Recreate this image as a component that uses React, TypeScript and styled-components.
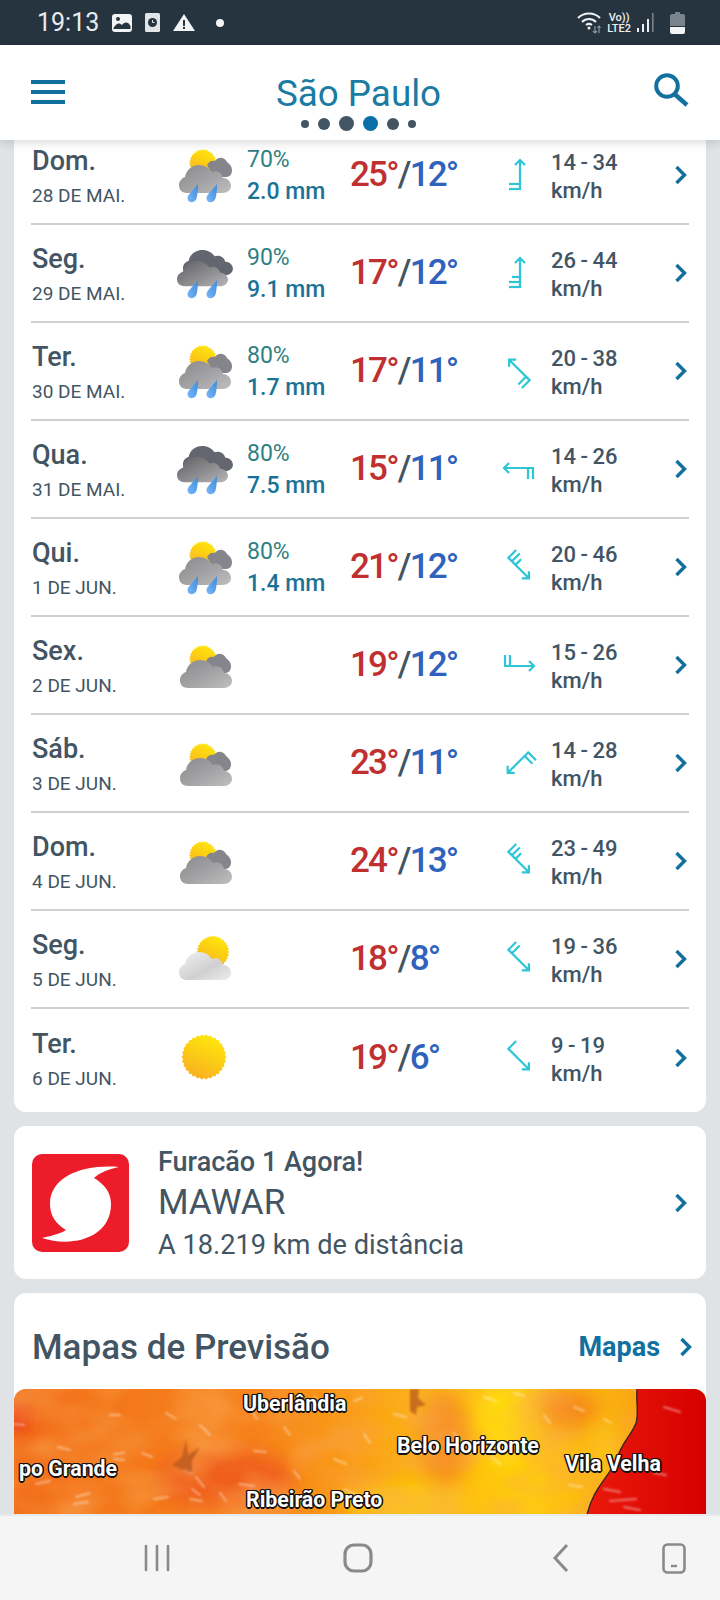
import React from "react";
import styled, {createGlobalStyle} from "styled-components";

const SLATE = "#435563";
const BLUE = "#12709f";

type Sky = "sunRain" | "cloudRain" | "sunCloud" | "sunLight" | "sun";

type Day = {
    name: string
    date: string
    sky: Sky
    chance?: string
    rain?: string
    max: number
    min: number
    angle: number
    barbs: number
    wind: string
}

const days: Day[] = [
    {name: "Dom.", date: "28 DE MAI.", sky: "sunRain", chance: "70%", rain: "2.0 mm", max: 25, min: 12, angle: 0, barbs: 2, wind: "14 - 34"},
    {name: "Seg.", date: "29 DE MAI.", sky: "cloudRain", chance: "90%", rain: "9.1 mm", max: 17, min: 12, angle: 0, barbs: 3, wind: "26 - 44"},
    {name: "Ter.", date: "30 DE MAI.", sky: "sunRain", chance: "80%", rain: "1.7 mm", max: 17, min: 11, angle: -45, barbs: 2, wind: "20 - 38"},
    {name: "Qua.", date: "31 DE MAI.", sky: "cloudRain", chance: "80%", rain: "7.5 mm", max: 15, min: 11, angle: -90, barbs: 2, wind: "14 - 26"},
    {name: "Qui.", date: "1 DE JUN.", sky: "sunRain", chance: "80%", rain: "1.4 mm", max: 21, min: 12, angle: 135, barbs: 3, wind: "20 - 46"},
    {name: "Sex.", date: "2 DE JUN.", sky: "sunCloud", max: 19, min: 12, angle: 90, barbs: 2, wind: "15 - 26"},
    {name: "Sáb.", date: "3 DE JUN.", sky: "sunCloud", max: 23, min: 11, angle: 225, barbs: 2, wind: "14 - 28"},
    {name: "Dom.", date: "4 DE JUN.", sky: "sunCloud", max: 24, min: 13, angle: 135, barbs: 3, wind: "23 - 49"},
    {name: "Seg.", date: "5 DE JUN.", sky: "sunLight", max: 18, min: 8, angle: 135, barbs: 2, wind: "19 - 36"},
    {name: "Ter.", date: "6 DE JUN.", sky: "sun", max: 19, min: 6, angle: 135, barbs: 1, wind: "9 - 19"},
];

const CLOUD = "M8 28 C2 28 0 24 0 20 C0 16 3 13 6 12 C7 5 13 0 20 0 C26 0 30 3 33 7 C38 5 43 8 44 13 C48 13 52 16 52 21 C52 25 48 28 44 28 Z";
const BACK_CLOUD = "M33 20 C35 16 38 15 41 16 C43 12 50 11 53 17 C56 19 58 22 58 25 C58 29 56 32 52 32 L40 32 Z";
const DROP = "M11 0 C11 5 10.5 11 9.5 14.5 C8.3 18 4.5 19 2.2 17.6 C0 16 0 13 1.6 11 C3.8 8 7.6 4.5 11 0Z";

const sunPoints = (cx: number, cy: number, r: number) => {
    const points: string[] = [];
    const spikes = 30;
    for (let i = 0; i < spikes * 2; i++) {
        const radius = i % 2 === 0 ? r : r - 1.6;
        const a = (Math.PI * i) / spikes;
        points.push(`${(cx + radius * Math.cos(a)).toFixed(2)},${(cy + radius * Math.sin(a)).toFixed(2)}`);
    }
    return points.join(" ");
};

const Gradients = () => (
    <defs>
        <linearGradient id="sunFill" x1="0.7" y1="0" x2="0.25" y2="1">
            <stop offset="0" stopColor="#ffe90a"/>
            <stop offset="1" stopColor="#f8ad22"/>
        </linearGradient>
        <linearGradient id="grayFill" x1="0.1" y1="0.1" x2="0.9" y2="0.9">
            <stop offset="0" stopColor="#8f8f92"/>
            <stop offset="0.55" stopColor="#a3a3a5"/>
            <stop offset="1" stopColor="#b9b9ba"/>
        </linearGradient>
        <linearGradient id="darkFill" x1="0.1" y1="0.1" x2="0.9" y2="0.9">
            <stop offset="0" stopColor="#68686c"/>
            <stop offset="0.6" stopColor="#8f8f92"/>
            <stop offset="1" stopColor="#adadb0"/>
        </linearGradient>
        <linearGradient id="lightFill" x1="0.1" y1="0.1" x2="0.9" y2="0.9">
            <stop offset="0" stopColor="#ececec"/>
            <stop offset="0.6" stopColor="#d0d0d0"/>
            <stop offset="1" stopColor="#e6e6e6"/>
        </linearGradient>
        <linearGradient id="dropFill" x1="1" y1="0" x2="0" y2="1">
            <stop offset="0" stopColor="#3a8ae0"/>
            <stop offset="1" stopColor="#7ab8f4"/>
        </linearGradient>
    </defs>
);

const Drops = ({y}: { y: number }) => (
    <g fill="url(#dropFill)">
        <path d={DROP} transform={`translate(13 ${y})`}/>
        <path d={DROP} transform={`translate(32 ${y})`}/>
    </g>
);

const WeatherIcon = ({sky}: { sky: Sky }) => (
    <svg width="60" height="60" viewBox="0 0 60 60">
        <Gradients/>
        {sky === "sun" && <polygon points={sunPoints(30, 29, 22.5)} fill="url(#sunFill)"/>}
        {sky === "sunRain" && (
            <g>
                <polygon points={sunPoints(29, 18, 14)} fill="url(#sunFill)"/>
                <path d={BACK_CLOUD} fill="#84868c"/>
                <path d={CLOUD} fill="url(#grayFill)" transform="translate(5 20)"/>
                <Drops y={39}/>
            </g>
        )}
        {sky === "sunCloud" && (
            <g>
                <polygon points={sunPoints(29, 24, 14)} fill="url(#sunFill)"/>
                <path d={BACK_CLOUD} fill="#84868c" transform="translate(-1 6)"/>
                <path d={CLOUD} fill="url(#grayFill)" transform="translate(6 25)"/>
            </g>
        )}
        {sky === "cloudRain" && (
            <g>
                <path d={CLOUD} fill="#63666e" transform="translate(9 7) scale(0.96 0.9)"/>
                <path d={CLOUD} fill="url(#darkFill)" transform="translate(3 18) scale(0.98 0.9)"/>
                <Drops y={37}/>
            </g>
        )}
        {sky === "sunLight" && (
            <g>
                <polygon points={sunPoints(39, 23, 16.5)} fill="url(#sunFill)"/>
                <path d={CLOUD} fill="url(#lightFill)" transform="translate(5 23)"/>
            </g>
        )}
    </svg>
);

const WindArrow = ({angle, barbs}: { angle: number, barbs: number }) => (
    <svg width="44" height="44" viewBox="0 0 44 44">
        <g transform={`rotate(${angle} 22 22)`} fill="none" stroke="#2cc6d6" strokeWidth="2.2">
            <path d="M23 37 V7 M18 12 L23 7 L28 12"/>
            {Array.from({length: barbs}).map((_, i) => (
                <path key={i} d={`M${i === 2 ? 15 : 12} ${36 - i * 5} H23`}/>
            ))}
        </g>
    </svg>
);

const Chevron = ({className}: { className?: string }) => (
    <svg className={className} width="13" height="20" viewBox="0 0 13 20">
        <path d="M2.5 2 L10.5 10 L2.5 18" fill="none" stroke={BLUE} strokeWidth="3.4"/>
    </svg>
);

const streaks: number[][] = [
    [0, 35, 10, 36], [10, 84, 20, 82], [22, 95, 36, 92], [62, 108, 76, 104], [44, 58, 56, 61], [60, 115, 74, 113],
    [96, 26, 106, 26], [100, 65, 110, 64], [100, 70, 110, 71], [128, 64, 138, 68], [140, 110, 154, 108], [152, 24, 162, 30],
    [170, 80, 178, 84], [186, 36, 196, 46], [176, 110, 188, 112], [182, 88, 190, 98], [178, 100, 186, 106], [206, 104, 212, 112],
    [235, 18, 243, 30], [270, 38, 276, 46], [240, 62, 252, 63], [280, 82, 286, 90], [225, 95, 240, 97], [300, 8, 306, 14],
    [340, 12, 348, 9], [350, 45, 356, 54], [320, 70, 332, 75], [330, 100, 342, 106], [380, 25, 392, 28], [410, 60, 420, 66],
    [440, 44, 447, 54], [470, 8, 482, 12], [478, 68, 486, 75], [500, 4, 510, 7], [530, 26, 536, 34],
    [560, 18, 570, 22], [590, 30, 597, 34], [555, 96, 568, 98], [596, 112, 622, 110], [590, 100, 606, 103], [650, 18, 666, 23],
    [620, 66, 634, 76], [610, 118, 626, 121], [640, 84, 652, 86],
];

const ForecastMap = () => (
    <MapDrawing viewBox="0 0 692 130" preserveAspectRatio="none">
        <defs>
            <linearGradient id="mapHeat" x1="0" y1="0" x2="1" y2="0">
                <stop offset="0" stopColor="#f2701c"/>
                <stop offset="0.35" stopColor="#f6821a"/>
                <stop offset="0.5" stopColor="#fa9e14"/>
                <stop offset="0.62" stopColor="#fdbe0e"/>
                <stop offset="0.75" stopColor="#ffcc0c"/>
                <stop offset="0.9" stopColor="#f9a612"/>
            </linearGradient>
            <linearGradient id="mapSea" x1="0" y1="0" x2="1" y2="0">
                <stop offset="0" stopColor="#ea1a0c"/>
                <stop offset="1" stopColor="#d60000"/>
            </linearGradient>
            <filter id="mapBlur" x="-30%" y="-30%" width="160%" height="160%">
                <feGaussianBlur stdDeviation="10"/>
            </filter>
            <filter id="mapSoft">
                <feGaussianBlur stdDeviation="0.9"/>
            </filter>
            <filter id="mapNoise" x="0" y="0" width="100%" height="100%">
                <feTurbulence type="fractalNoise" baseFrequency="0.018 0.03" numOctaves="2" seed="4"/>
                <feColorMatrix values="0 0 0 0 0.95  0 0 0 0 0.38  0 0 0 0 0.08  1.2 0 0 0 -0.42"/>
            </filter>
        </defs>
        <rect width="692" height="130" fill="url(#mapHeat)"/>
        <g filter="url(#mapBlur)">
            <ellipse cx="2" cy="28" rx="12" ry="18" fill="#e8260e"/>
            <ellipse cx="210" cy="90" rx="70" ry="30" fill="#f0601a"/>
            <ellipse cx="430" cy="50" rx="26" ry="50" fill="#f6901a"/>
            <ellipse cx="490" cy="30" rx="26" ry="50" fill="#ffd80e"/>
            <ellipse cx="390" cy="115" rx="60" ry="18" fill="#fccf0e"/>
            <ellipse cx="555" cy="20" rx="30" ry="22" fill="#f58a18"/>
            <ellipse cx="590" cy="60" rx="14" ry="24" fill="#fdc80e"/>
        </g>
        <rect width="692" height="130" filter="url(#mapNoise)"/>
        <path d="M623 0 C622 14 625 24 622 34 C618 46 608 52 602 72 C592 92 578 100 572 130 H692 V0 Z" fill="url(#mapSea)"/>
        <path d="M623 0 C622 14 625 24 622 34 C618 46 608 52 602 72 C592 92 578 100 572 130" fill="none" stroke="#3a2320" strokeWidth="1.4"/>
        <g stroke="#fff" strokeOpacity="0.42" strokeWidth="2" strokeLinecap="round" filter="url(#mapSoft)">
            {streaks.map((s, i) => <line key={i} x1={s[0]} y1={s[1]} x2={s[2]} y2={s[3]}/>)}
        </g>
        <g fill="#b4561e" fillOpacity="0.72" filter="url(#mapSoft)">
            <path d="M172 50 L174 66 L186 58 L178 72 L178 84 L166 80 L158 76 L168 68Z"/>
            <path d="M396 0 L405 0 L404 9 L412 16 L403 18 L402 26 L396 22 Z"/>
        </g>
    </MapDrawing>
);

const App = () => (
    <Screen>
        <GlobalStyle/>
        <StatusBar>
            <StatusGroup>
                <Clock>19:13</Clock>
                <svg width="20" height="18" viewBox="0 0 20 18">
                    <rect width="20" height="18" rx="3" fill="#f2f4f5"/>
                    <circle cx="6" cy="5" r="2" fill="#263440"/>
                    <path d="M1.5 14 C5 8 8 9 10 11 C12 8 16 7 18.5 12 V15 H1.5Z" fill="#263440"/>
                </svg>
                <svg width="15" height="19" viewBox="0 0 15 19">
                    <rect width="15" height="19" rx="1.5" fill="#e2e5e7"/>
                    <circle cx="7.5" cy="9.5" r="4.5" fill="#263440"/>
                    <path d="M7.5 7 V9.5 H9.5" stroke="#e2e5e7" fill="none"/>
                </svg>
                <svg width="22" height="17" viewBox="0 0 22 17">
                    <path d="M11 0 L22 17 H0Z" fill="#f2f4f5"/>
                    <rect x="10" y="6" width="2" height="6" fill="#263440"/>
                    <rect x="10" y="13" width="2" height="2" fill="#263440"/>
                </svg>
                <StatusDot/>
            </StatusGroup>
            <StatusGroup $gap={5}>
                <svg width="25" height="22" viewBox="0 0 25 22">
                    <g fill="none" stroke="#eef1f2" strokeWidth="2">
                        <path d="M1 6 C7 0 17 0 23 6"/>
                        <path d="M5 10 C9 6 15 6 19 10"/>
                        <path d="M9 13 C11 11.5 13 11.5 15 13"/>
                    </g>
                    <circle cx="12" cy="16" r="1.5" fill="#eef1f2"/>
                    <path d="M18 14 V21 M16 19 L18 21 L20 19 M22 21 V14 M20.5 16 L22 14 L23.5 16" stroke="#8c979f" strokeWidth="1.2" fill="none"/>
                </svg>
                <Carrier>
                    <span>Vo))</span>
                    <span>LTE2</span>
                </Carrier>
                <svg width="18" height="22" viewBox="0 0 18 22">
                    <rect x="1" y="16" width="2" height="4" fill="#eef1f2"/>
                    <rect x="6" y="12" width="2" height="8" fill="#eef1f2"/>
                    <rect x="11" y="7" width="2" height="13" fill="#eef1f2"/>
                    <rect x="16" y="1" width="1.6" height="19" fill="#78838b"/>
                </svg>
                <BatterySpace/>
                <svg width="15" height="22" viewBox="0 0 15 22">
                    <path d="M5 0 H10 V2 H13 Q15 2 15 4 V14 H0 V4 Q0 2 2 2 H5Z" fill="#78838b"/>
                    <path d="M0 15 H15 V20 Q15 22 13 22 H2 Q0 22 0 20Z" fill="#f2f4f5"/>
                </svg>
            </StatusGroup>
        </StatusBar>

        <Header>
            <Burger>
                <span/>
                <span/>
                <span/>
            </Burger>
            <TitleBlock>
                <City>São Paulo</City>
                <Pager>
                    <Dot $size={8}/>
                    <Dot $size={12}/>
                    <Dot $size={15}/>
                    <Dot $size={15} $active/>
                    <Dot $size={12}/>
                    <Dot $size={8}/>
                </Pager>
            </TitleBlock>
            <svg width="38" height="38" viewBox="0 0 38 38">
                <circle cx="15" cy="13" r="10.8" fill="none" stroke={BLUE} strokeWidth="4"/>
                <path d="M22.5 21 L35 32" stroke={BLUE} strokeWidth="4.4"/>
            </svg>
        </Header>

        <Content>
            <Scroller>
                <Card>
                    {days.map((day, i) => (
                        <Row key={i}>
                            <DayCell>
                                <DayName>{day.name}</DayName>
                                <DayDate>{day.date}</DayDate>
                            </DayCell>
                            <WeatherIcon sky={day.sky}/>
                            <RainCell>
                                <Chance>{day.chance}</Chance>
                                <Amount>{day.rain}</Amount>
                            </RainCell>
                            <Temps>
                                <Max>{day.max}°</Max>/<Min>{day.min}°</Min>
                            </Temps>
                            <WindArrow angle={day.angle} barbs={day.barbs}/>
                            <WindText>
                                <span>{day.wind}</span>
                                <span>km/h</span>
                            </WindText>
                            <Chevron/>
                        </Row>
                    ))}
                </Card>

                <StormCard>
                    <StormLogo viewBox="0 0 97 98">
                        <rect width="97" height="98" rx="10" fill="#ed1c2a"/>
                        <path d="M87 13 C52 10 18 22 18 50 C18 62 24 70 34 76 C28 80 18 82 10 84 C40 94 79 84 79 50 C79 38 72 30 62 24 C68 18 78 15 87 13 Z" fill="#fff"/>
                    </StormLogo>
                    <StormText>
                        <StormKind>Furacão 1 Agora!</StormKind>
                        <StormName>MAWAR</StormName>
                        <StormDistance>A 18.219 km de distância</StormDistance>
                    </StormText>
                    <Chevron/>
                </StormCard>

                <MapCard>
                    <MapHead>
                        <MapTitle>Mapas de Previsão</MapTitle>
                        <MapLink>
                            Mapas
                            <Chevron/>
                        </MapLink>
                    </MapHead>
                    <MapArea>
                        <ForecastMap/>
                        <Place $x={229} $y={4}>Uberlândia</Place>
                        <Place $x={383} $y={46}>Belo Horizonte</Place>
                        <Place $x={551} $y={64}>Vila Velha</Place>
                        <Place $x={5} $y={69}>po Grande</Place>
                        <Place $x={232} $y={100}>Ribeirão Preto</Place>
                    </MapArea>
                </MapCard>
            </Scroller>
        </Content>

        <NavBar>
            <svg width="26" height="28" viewBox="0 0 26 28">
                <g stroke="#8a8a8a" strokeWidth="2.6" strokeLinecap="round">
                    <path d="M2 2 V26"/>
                    <path d="M13 2 V26"/>
                    <path d="M24 2 V26"/>
                </g>
            </svg>
            <svg width="30" height="30" viewBox="0 0 30 30">
                <rect x="2" y="2" width="26" height="26" rx="9" fill="none" stroke="#8a8a8a" strokeWidth="3.2"/>
            </svg>
            <svg width="18" height="30" viewBox="0 0 18 30">
                <path d="M15 2 L3 15 L15 28" fill="none" stroke="#8a8a8a" strokeWidth="3"/>
            </svg>
            <svg width="24" height="31" viewBox="0 0 24 31">
                <rect x="1.5" y="1.5" width="21" height="28" rx="4" fill="none" stroke="#8a8a8a" strokeWidth="2.6"/>
                <path d="M9 23 H15" stroke="#8a8a8a" strokeWidth="2.4"/>
            </svg>
        </NavBar>
    </Screen>
);

const GlobalStyle = createGlobalStyle`
  html, body {
    margin: 0;
    padding: 0;
    background: #dfe3e6;
  }

  * {
    box-sizing: border-box;
  }
`;

const Screen = styled.div`
  width: 720px;
  height: 1600px;
  display: flex;
  flex-direction: column;
  overflow: hidden;
  background: #dfe3e6;
  font-family: Roboto, "Liberation Sans", sans-serif;
  color: ${SLATE};
`;

const StatusBar = styled.div`
  height: 45px;
  flex: none;
  display: flex;
  align-items: center;
  justify-content: space-between;
  padding: 0 35px 0 37px;
  background: #263440;
`;

const StatusGroup = styled.div<{ $gap?: number }>`
  display: flex;
  align-items: center;
  gap: ${props => props.$gap ?? 13}px;
`;

const Clock = styled.span`
  font-size: 25px;
  color: #e8ecef;
`;

const StatusDot = styled.span`
  width: 8px;
  height: 8px;
  margin-left: 8px;
  border-radius: 50%;
  background: #f2f4f5;
`;

const Carrier = styled.div`
  display: flex;
  flex-direction: column;
  align-items: center;
  font-size: 11px;
  font-weight: 500;
  line-height: 11px;
  color: #eef1f2;
`;

const BatterySpace = styled.span`
  width: 6px;
`;

const Header = styled.div`
  height: 95px;
  flex: none;
  position: relative;
  z-index: 2;
  display: flex;
  align-items: center;
  justify-content: space-between;
  padding: 0 30px 2px 31px;
  background: #fff;
  box-shadow: 0 2px 10px rgba(0, 0, 0, 0.16);
`;

const Burger = styled.div`
  width: 34px;
  display: flex;
  flex-direction: column;
  gap: 6px;

  span {
    height: 4px;
    background: ${BLUE};
  }
`;

const TitleBlock = styled.div`
  display: flex;
  flex-direction: column;
  align-items: center;
  padding-top: 22px;
`;

const City = styled.div`
  font-size: 36.8px;
  line-height: 42px;
  color: #1a7ba3;
`;

const Pager = styled.div`
  height: 18px;
  display: flex;
  align-items: center;
  justify-content: center;
  gap: 9px;
`;

const Dot = styled.span<{ $size: number, $active?: boolean }>`
  width: ${props => props.$size}px;
  height: ${props => props.$size}px;
  border-radius: 50%;
  background: ${props => props.$active ? "#0a6fa8" : SLATE};
`;

const Content = styled.div`
  flex: 1;
  overflow: hidden;
  min-height: 0;
`;

const Scroller = styled.div`
  display: flex;
  flex-direction: column;
  gap: 14px;
  margin-top: -13px;
  padding: 0 14px;
`;

const Card = styled.div`
  display: flex;
  flex-direction: column;
  padding: 0 17px 5px;
  background: #fff;
  border-radius: 12px;
`;

const Row = styled.div`
  height: 98px;
  display: grid;
  grid-template-columns: 143px 60px 116px 147px 44px 1fr 13px;
  align-items: center;
  padding-right: 2px;
  border-bottom: 2px solid #cfcfcf;

  &:last-child {
    border-bottom: none;
  }
`;

const DayCell = styled.div`
  display: flex;
  flex-direction: column;
  padding: 3px 0 0 1px;
  gap: 7px;
`;

const DayName = styled.div`
  font-size: 27px;
  line-height: 32px;
  font-weight: 500;
`;

const DayDate = styled.div`
  font-size: 19px;
  line-height: 24px;
`;

const RainCell = styled.div`
  display: flex;
  flex-direction: column;
  gap: 4px;
  padding: 2px 0 0 13px;
`;

const Chance = styled.div`
  font-size: 23px;
  line-height: 28px;
  color: #2f7f83;
`;

const Amount = styled.div`
  font-size: 23px;
  line-height: 28px;
  font-weight: 500;
  color: #1a7396;
`;

const Temps = styled.div`
  font-size: 35px;
  line-height: 40px;
  font-weight: 500;
  letter-spacing: -1.8px;
  color: ${SLATE};
`;

const Max = styled.span`
  color: #c03030;
`;

const Min = styled.span`
  color: #2f62bd;
`;

const WindText = styled.div`
  display: flex;
  flex-direction: column;
  padding: 3px 0 0 10px;
  font-size: 22px;
  line-height: 28px;
  font-weight: 500;
  word-spacing: -1px;
`;

const StormCard = styled.div`
  height: 153px;
  display: flex;
  align-items: center;
  padding: 0 19px 0 18px;
  background: #fff;
  border-radius: 12px;
`;

const StormLogo = styled.svg`
  width: 97px;
  height: 98px;
  flex: none;
`;

const StormText = styled.div`
  flex: 1;
  display: flex;
  flex-direction: column;
  padding: 2px 0 0 29px;
`;

const StormKind = styled.div`
  font-size: 27px;
  line-height: 30px;
  font-weight: 500;
`;

const StormName = styled.div`
  font-size: 35px;
  line-height: 52px;
`;

const StormDistance = styled.div`
  font-size: 27.2px;
  line-height: 32px;
`;

const MapCard = styled.div`
  background: #fff;
  border-radius: 12px 12px 0 0;
`;

const MapHead = styled.div`
  height: 96px;
  display: flex;
  align-items: center;
  justify-content: space-between;
  padding: 12px 14px 0 18px;
`;

const MapTitle = styled.div`
  font-size: 35px;
  font-weight: 500;
`;

const MapLink = styled.div`
  display: flex;
  align-items: center;
  gap: 19px;
  font-size: 27px;
  font-weight: 700;
  color: ${BLUE};
`;

const MapArea = styled.div`
  position: relative;
  height: 130px;
  overflow: hidden;
  border-radius: 12px 12px 0 0;
`;

const MapDrawing = styled.svg`
  display: block;
  width: 100%;
  height: 100%;
`;

const Place = styled.span<{ $x: number, $y: number }>`
  position: absolute;
  left: ${props => props.$x}px;
  top: ${props => props.$y}px;
  font-size: 21.3px;
  line-height: 22px;
  font-weight: 700;
  white-space: nowrap;
  color: #fff;
  text-shadow: 1.5px 0 0 #111, -1.5px 0 0 #111, 0 1.5px 0 #111, 0 -1.5px 0 #111, 1px 1px 0 #111, -1px -1px 0 #111, 1px -1px 0 #111, -1px 1px 0 #111;
`;

const NavBar = styled.div`
  height: 86px;
  flex: none;
  position: relative;
  display: grid;
  grid-template-columns: 144px 26px 173px 30px 179px 18px 92px 24px;
  align-items: center;
  background: #f5f5f5;
  border-top: 2px solid #e8ebec;

  svg:nth-child(1) {
    grid-column: 2;
  }

  svg:nth-child(2) {
    grid-column: 4;
  }

  svg:nth-child(3) {
    grid-column: 6;
  }

  svg:nth-child(4) {
    grid-column: 8;
  }
`;

export default App
